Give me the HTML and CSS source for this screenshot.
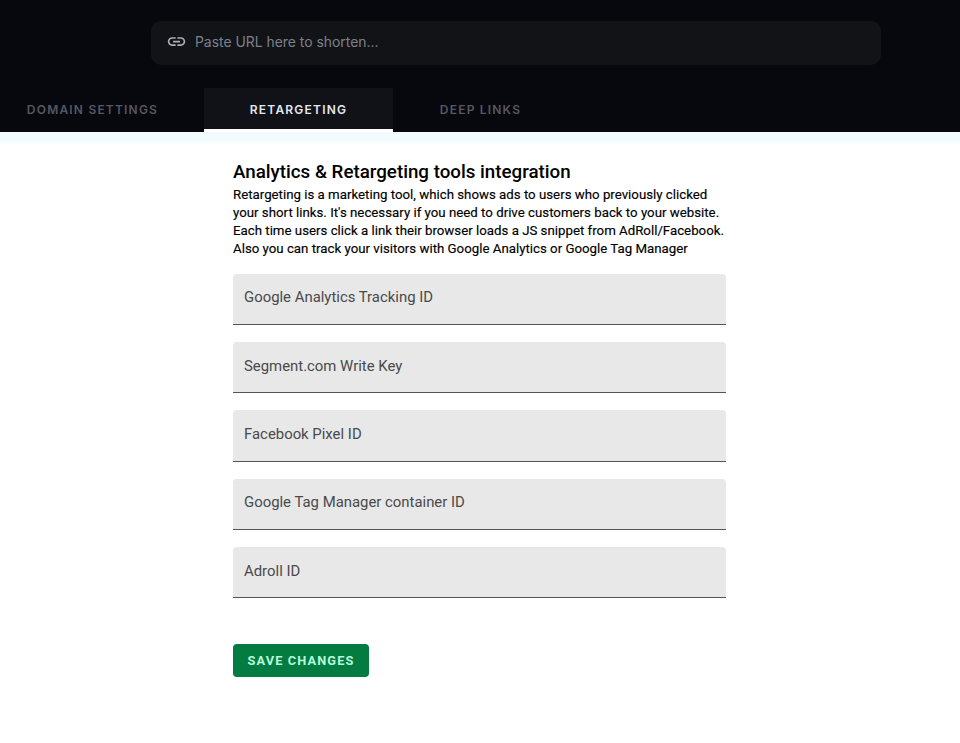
FILE: index.html
```html
<!DOCTYPE html>
<html lang="en">
<head>
<meta charset="utf-8">
<title>Retargeting</title>
<link rel="stylesheet" href="styles.css">
</head>
<body>
<header class="top">
  <div class="shorten">
    <svg class="link-icon" viewBox="0 0 24 24" width="24" height="24" aria-hidden="true"><path d="M3.9 12c0-1.71 1.39-3.1 3.1-3.1h4V7H7c-2.76 0-5 2.24-5 5s2.24 5 5 5h4v-1.9H7c-1.71 0-3.1-1.39-3.1-3.1zM8 13h8v-2H8v2zm9-6h-4v1.9h4c1.71 0 3.1 1.39 3.1 3.1s-1.39 3.1-3.1 3.1h-4V17h4c2.76 0 5-2.24 5-5s-2.24-5-5-5z"/></svg>
    <span class="shorten-text">Paste URL here to shorten...</span>
  </div>
  <nav class="tabs">
    <a class="tab tab-domain">DOMAIN SETTINGS</a>
    <a class="tab tab-active">RETARGETING</a>
    <a class="tab tab-deep">DEEP LINKS</a>
  </nav>
</header>
<main class="content">
  <h1 class="title">Analytics &amp; Retargeting tools integration</h1>
  <p class="intro">Retargeting is a marketing tool, which shows ads to users who previously clicked<br>your short links. It's necessary if you need to drive customers back to your website.<br>Each time users click a link their browser loads a JS snippet from AdRoll/Facebook.<br>Also you can track your visitors with Google Analytics or Google Tag Manager</p>
  <div class="fields">
    <div class="field">Google Analytics Tracking ID</div>
    <div class="field">Segment.com Write Key</div>
    <div class="field">Facebook Pixel ID</div>
    <div class="field">Google Tag Manager container ID</div>
    <div class="field">Adroll ID</div>
  </div>
  <button class="save" type="button">SAVE CHANGES</button>
</main>
</body>
</html>
```
FILE: styles.css
```css
* { box-sizing: border-box; }
html, body { margin: 0; padding: 0; }
body { background: #fff; font-family: Roboto, sans-serif; height: 743px; overflow: hidden; }
.top { background: #07080d; height: 132px; padding-top: 21px; }
.shorten { width: 730px; height: 44px; margin-left: 151px; background: #121317; border-radius: 10px; display: flex; align-items: center; padding: 0 0 3px 15px; gap: 8px; }
.link-icon { width: 21px; height: 21px; fill: #a9adb8; flex: none; }
.shorten-text { font-family: Inter, sans-serif; font-size: 13.9px; color: #7d808c; }
.tabs { display: flex; margin-top: 23px; height: 44px; }
.tab { font-size: 12px; font-weight: 600; letter-spacing: 1.2px; display: flex; align-items: center; justify-content: center; height: 44px; font-family: Inter, sans-serif; color: #555762; }
.tab-domain { width: 204px; padding: 0 19px 2px 0; }
.tab-active { width: 189px; background: #111217; color: #e3e7f3; border-bottom: 3px solid #fff; padding-top: 1px; }
.tab-deep { width: 175px; padding-bottom: 2px; }
.content { background: linear-gradient(#f2fcff 0, #f2fcff 8px, #fff 14px); padding: 29px 0 0 233px; height: 611px; }
.title { margin: 0; font-size: 18.75px; line-height: 22px; font-weight: 500; color: #000; }
.intro { margin: 2.5px 0 0; font-size: 13.28px; line-height: 18.3px; color: #000; white-space: nowrap; -webkit-text-stroke: 0.15px #000; }
.fields { display: flex; flex-direction: column; gap: 17px; margin-top: 15px; width: 493px; }
.field { height: 51.3px; background: #e8e8e8; border-bottom: 1px solid #555; border-radius: 4px 4px 0 0; display: flex; align-items: center; padding: 0 11px 3px; font-size: 14.9px; color: #4a4a4a; }
.save { display: block; margin-top: 45.5px; width: 136px; height: 33px; padding: 0; border: 0; border-radius: 4px; background: #047b40; color: #b4fadb; font-family: Roboto, sans-serif; font-size: 12.8px; font-weight: 700; letter-spacing: 1.1px; }
```
